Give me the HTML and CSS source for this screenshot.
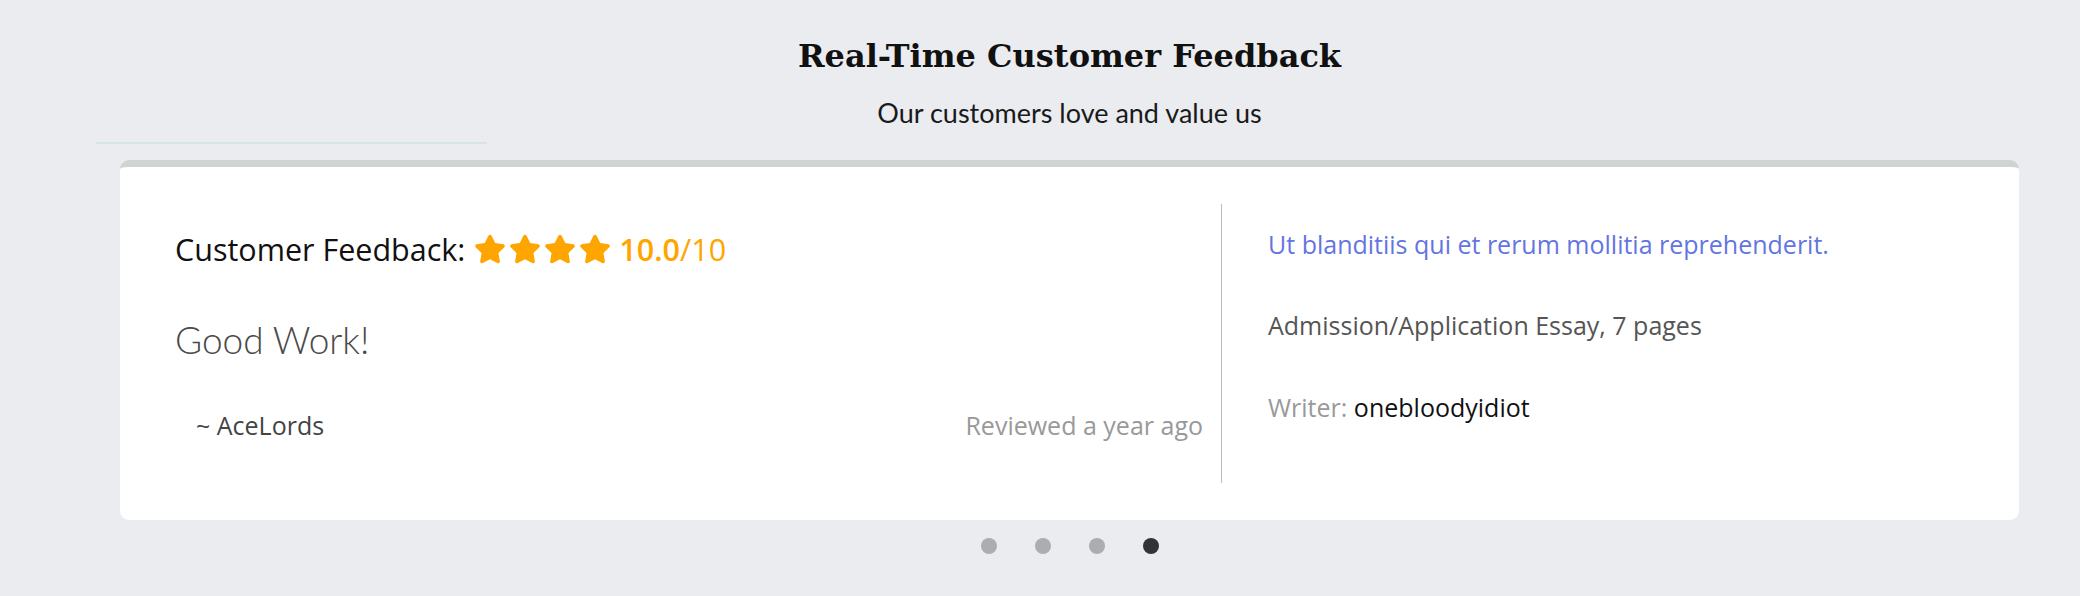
FILE: index.html
```html
<!DOCTYPE html>
<html lang="en">
<head>
<meta charset="utf-8">
<title>Real-Time Customer Feedback</title>
<link rel="stylesheet" href="styles.css">
</head>
<body>
<section class="feedback">
  <header class="feedback-head">
    <h2 class="title">Real-Time Customer Feedback</h2>
    <p class="subtitle">Our customers love and value us</p>
  </header>
  <hr class="rule">
  <article class="card">
    <div class="card-left">
      <div class="rating-row">
        <span class="rating-label">Customer Feedback:</span>
        <span class="stars">
          <svg class="star" viewBox="0 0 576 512"><path d="M259.3 17.8L194 150.2 47.9 171.5c-26.2 3.8-36.7 36.1-17.7 54.6l105.7 103-25 145.5c-4.5 26.3 23.2 46 46.4 33.7L288 439.6l130.7 68.7c23.2 12.2 50.9-7.4 46.4-33.7l-25-145.5 105.7-103c19-18.5 8.5-50.8-17.7-54.6L382 150.2 316.7 17.8c-11.7-23.6-45.6-23.9-57.4 0z"/></svg>
          <svg class="star" viewBox="0 0 576 512"><path d="M259.3 17.8L194 150.2 47.9 171.5c-26.2 3.8-36.7 36.1-17.7 54.6l105.7 103-25 145.5c-4.5 26.3 23.2 46 46.4 33.7L288 439.6l130.7 68.7c23.2 12.2 50.9-7.4 46.4-33.7l-25-145.5 105.7-103c19-18.5 8.5-50.8-17.7-54.6L382 150.2 316.7 17.8c-11.7-23.6-45.6-23.9-57.4 0z"/></svg>
          <svg class="star" viewBox="0 0 576 512"><path d="M259.3 17.8L194 150.2 47.9 171.5c-26.2 3.8-36.7 36.1-17.7 54.6l105.7 103-25 145.5c-4.5 26.3 23.2 46 46.4 33.7L288 439.6l130.7 68.7c23.2 12.2 50.9-7.4 46.4-33.7l-25-145.5 105.7-103c19-18.5 8.5-50.8-17.7-54.6L382 150.2 316.7 17.8c-11.7-23.6-45.6-23.9-57.4 0z"/></svg>
          <svg class="star" viewBox="0 0 576 512"><path d="M259.3 17.8L194 150.2 47.9 171.5c-26.2 3.8-36.7 36.1-17.7 54.6l105.7 103-25 145.5c-4.5 26.3 23.2 46 46.4 33.7L288 439.6l130.7 68.7c23.2 12.2 50.9-7.4 46.4-33.7l-25-145.5 105.7-103c19-18.5 8.5-50.8-17.7-54.6L382 150.2 316.7 17.8c-11.7-23.6-45.6-23.9-57.4 0z"/></svg>
        </span>
        <span class="score"><span class="score-value">10.0</span>/10</span>
      </div>
      <p class="quote">Good Work!</p>
      <div class="meta-row">
        <span class="author">~ AceLords</span>
        <span class="reviewed">Reviewed a year ago</span>
      </div>
    </div>
    <div class="card-right">
      <p class="order-title">Ut blanditiis qui et rerum mollitia reprehenderit.</p>
      <p class="order-type">Admission/Application Essay, 7 pages</p>
      <p class="writer"><span class="writer-label">Writer:</span> <span class="writer-name">onebloodyidiot</span></p>
    </div>
  </article>
  <nav class="dots">
    <span class="dot"></span>
    <span class="dot"></span>
    <span class="dot"></span>
    <span class="dot active"></span>
  </nav>
</section>
</body>
</html>
```

FILE: styles.css
```css
* { box-sizing: border-box; }

html, body {
  margin: 0;
  padding: 0;
  background: #eaecf0;
}

body {
  font-family: "Open Sans", "Noto Sans", sans-serif;
  color: #222;
}

.feedback {
  margin: 0 61px 0 120px;
  padding-top: 36px;
}

.feedback-head {
  text-align: center;
}

.title {
  margin: 0;
  font-family: "DejaVu Serif", "Liberation Serif", serif;
  font-weight: bold;
  font-size: 32px;
  line-height: 40px;
  color: #111;
}

.subtitle {
  margin: 20px 0 0;
  font-family: "Lato", "Open Sans", sans-serif;
  font-weight: 400;
  font-size: 27px;
  line-height: 34px;
  color: #1a1a1a;
}

.rule {
  margin: 12px 0 0 -24px;
  width: 391px;
  height: 2px;
  border: 0;
  background: #d6e4e4;
}

.card {
  margin-top: 16px;
  display: grid;
  grid-template-columns: 1101px 1fr;
  background: #fff;
  border-top: 7px solid #cfd3d3;
  border-radius: 9px;
  padding: 37px 0 37px;
}

.card-left {
  padding: 23px 18px 0 55px;
  height: 279px;
}

.rating-row {
  display: flex;
  align-items: center;
  height: 44px;
  font-size: 30.5px;
  color: #111;
}

.stars {
  display: flex;
  gap: 3px;
  margin: 0 8px 0 9px;
}

.star {
  width: 32px;
  height: 30px;
  fill: #ffa500;
}

.score {
  color: #ffa500;
}

.score-value {
  font-weight: 600;
}

.quote {
  margin: 47px 0 0;
  font-family: "Lato", "Open Sans", sans-serif;
  font-weight: 300;
  font-size: 37px;
  line-height: 44px;
  color: #4a4a4a;
}

.meta-row {
  margin-top: 47px;
  display: flex;
  justify-content: space-between;
  font-size: 25px;
  line-height: 32px;
  padding-left: 21px;
}

.author { color: #444; }
.reviewed { color: #999; }

.card-right {
  border-left: 1px solid #bdbdbd;
  padding: 22px 20px 0 46px;
  font-size: 25px;
  line-height: 36px;
}

.card-right p { margin: 0; }

.order-title { color: #6474e2; }

.order-type {
  color: #555;
  margin-top: 45px !important;
}

.writer { margin-top: 46px !important; }
.writer-label { color: #999; }
.writer-name { color: #111; }

.dots {
  display: flex;
  justify-content: center;
  gap: 38px;
  margin-top: 18px;
}

.dot {
  width: 16px;
  height: 16px;
  border-radius: 50%;
  background: #adadb0;
}

.dot.active { background: #333336; }
```
